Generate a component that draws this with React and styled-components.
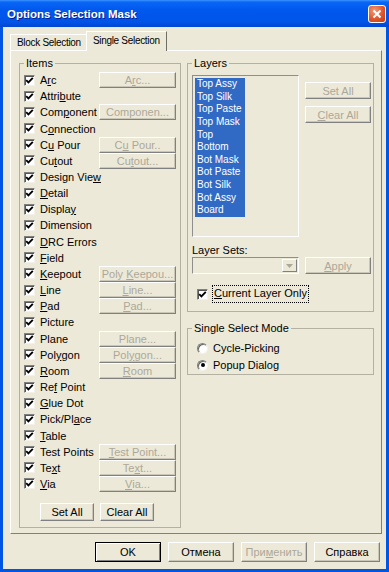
import React from 'react';
import styled, { createGlobalStyle, css } from 'styled-components';

const GlobalStyle = createGlobalStyle`
  html, body { margin: 0; padding: 0; background: #fff; }
  body {
    font-family: "Liberation Sans", Arial, sans-serif;
    font-size: 11px;
    color: #000;
  }
  * { box-sizing: border-box; }
`;

const Window = styled.div`
  width: 389px;
  height: 572px;
  display: flex;
  flex-direction: column;
  background: #0055e5;
`;

const TitleBar = styled.div`
  flex: none;
  height: 27px;
  display: flex;
  align-items: center;
  justify-content: space-between;
  padding: 1px 3px 0 7px;
  background: linear-gradient(
    #3d95ff 0,
    #0a66f5 2px,
    #0058ee 10px,
    #0054e8 22px,
    #0046d2 27px
  );
`;

const Title = styled.span`
  color: #fff;
  font-weight: bold;
  font-size: 11.5px;
  text-shadow: 1px 1px 0 #0a1e8c;
`;

const CloseButton = styled.div`
  width: 18px;
  height: 18px;
  border: 1px solid #fff;
  border-radius: 3px;
  display: flex;
  align-items: center;
  justify-content: center;
  background: radial-gradient(circle at 35% 30%, #f39a78 0, #e0562c 55%, #c43a12 100%);
`;

const Client = styled.div`
  flex: 1;
  margin: 0 3px 3px;
  background: #ece9d8;
  display: flex;
  flex-direction: column;
  padding: 4px 4px 7px 7px;
`;

const TabStrip = styled.div`
  height: 19px;
  display: flex;
  align-items: flex-end;
  position: relative;
  z-index: 1;
`;

const Tab = styled.div`
  display: flex;
  align-items: center;
  font-size: 10px;
  letter-spacing: -0.3px;
  white-space: nowrap;
  background: #ece9d8;
  border-top: 1px solid #fff;
  border-left: 1px solid #fff;
  ${p => p.$active
    ? css`
        height: 20px;
        margin-bottom: -1px;
        padding: 0 6px 2px 6px;
        border-right: 1px solid #716f64;
      `
    : css`
        height: 16px;
        padding: 0 5px 0 6px;
      `}
`;

const Panel = styled.div`
  height: 484px;
  display: flex;
  gap: 6px;
  padding: 6px 7px 5px 8px;
  border-top: 1px solid #fff;
  border-left: 1px solid #fff;
  border-right: 1px solid #808080;
  border-bottom: 1px solid #808080;
`;

const Group = styled.fieldset`
  margin: 0;
  min-width: 0;
  border: 1px solid #b4b1a3;
  padding: 0 4px;
`;

const Legend = styled.legend`
  padding: 0 2px;
  line-height: 13px;
`;

const ItemsGroup = styled(Group)`
  width: 162px;
  flex: none;
  padding: 2px 4px 6px 4px;
  display: flex;
  flex-direction: column;
`;

const ItemRow = styled.div`
  height: 16.16px;
  display: grid;
  grid-template-columns: 1fr 77px;
  align-items: stretch;
`;

const CheckLabel = styled.label`
  display: flex;
  align-items: center;
  gap: ${p => p.$gap || 5}px;
  white-space: nowrap;
`;

const Box = styled.span`
  flex: none;
  width: 11px;
  height: 11px;
  background: #fff;
  border-top: 1px solid #808080;
  border-left: 1px solid #808080;
  border-right: 1px solid #f4f2e8;
  border-bottom: 1px solid #f4f2e8;
  box-shadow: inset 1px 1px 0 #555;
  display: flex;
  align-items: center;
  justify-content: center;
`;

const Button = styled.div`
  display: flex;
  align-items: center;
  justify-content: center;
  white-space: pre;
  overflow: hidden;
  background: #ece9d8;
  color: ${p => (p.$disabled ? '#aca899' : '#000')};
  border-top: 1px solid #fff;
  border-left: 1px solid #fff;
  border-right: 1px solid #808080;
  border-bottom: 1px solid #808080;
  box-shadow: inset -1px -1px 0 #cbc7b8;
`;

const SetButtons = styled.div`
  display: flex;
  gap: 6px;
  margin-top: 11px;
  padding-left: 16px;
`;

const SmallButton = styled(Button)`
  width: 54px;
  height: 18px;
`;

const RightColumn = styled.div`
  width: 187px;
  flex: none;
  display: flex;
  flex-direction: column;
  gap: 10px;
`;

const LayersGroup = styled(Group)`
  padding: 5px 2px 9px 4px;
`;

const LayersGrid = styled.div`
  display: grid;
  grid-template-columns: 107px 66px;
  column-gap: 6px;
  align-items: end;
`;

const ListBox = styled.div`
  height: 162px;
  padding: 2px 0 0 2px;
  border-top: 1px solid #8e8e8e;
  border-left: 1px solid #8e8e8e;
  border-right: 1px solid #fff;
  border-bottom: 1px solid #fff;
`;

const ListItem = styled.div`
  width: 50px;
  height: 12.64px;
  line-height: 12.64px;
  padding-left: 2px;
  font-size: 10px;
  color: #fff;
  background: #316ac5;
  white-space: nowrap;
`;

const ListButtons = styled.div`
  align-self: start;
  margin-top: 7px;
  display: flex;
  flex-direction: column;
  gap: 7px;
`;

const SideButton = styled(Button)`
  height: 17px;
`;

const FieldLabel = styled.div`
  grid-column: 1 / 3;
  margin-top: 7px;
  line-height: 13px;
`;

const ComboBox = styled.div`
  height: 17px;
  display: flex;
  justify-content: flex-end;
  padding: 1px;
  border-top: 1px solid #8e8e8e;
  border-left: 1px solid #8e8e8e;
  border-right: 1px solid #fff;
  border-bottom: 1px solid #fff;
`;

const DropButton = styled.div`
  width: 15px;
  display: flex;
  align-items: center;
  justify-content: center;
  border-top: 1px solid #fff;
  border-left: 1px solid #fff;
  border-right: 1px solid #808080;
  border-bottom: 1px solid #808080;
`;

const CheckRow = styled.div`
  grid-column: 1 / 3;
  margin-top: 12px;
  height: 16px;
  display: flex;
  padding-left: 5px;
`;

const Focus = styled.span`
  padding: 1px 1px 2px;
  border: 1px dotted #000;
  line-height: 13px;
`;

const ModeGroup = styled(Group)`
  padding: 5px 4px 1px 4px;
  display: flex;
  flex-direction: column;
  gap: 1px;
`;

const RadioRow = styled.label`
  height: 16px;
  display: flex;
  align-items: center;
  gap: 5px;
  padding-left: 5px;
`;

const Radio = styled.span`
  width: 11px;
  height: 11px;
  border-radius: 50%;
  background: #fff;
  border: 1px solid;
  border-color: #808080 #f4f2e8 #f4f2e8 #808080;
  box-shadow: inset 1px 1px 0 #666;
  display: flex;
  align-items: center;
  justify-content: center;

  &::after {
    content: '';
    width: 4px;
    height: 4px;
    border-radius: 50%;
    background: ${p => (p.$checked ? '#000' : 'transparent')};
  }
`;

const Footer = styled.div`
  margin-top: 8px;
  display: flex;
  justify-content: flex-end;
  gap: 7px;
  padding-right: 2px;
`;

const DialogButton = styled(Button)`
  width: 66px;
  height: 20px;
  ${p => p.$default && css`
    border: 1px solid #000;
    box-shadow: inset 1px 1px 0 #fff, inset -1px -1px 0 #808080;
  `}
`;

// '&' marks the mnemonic letter, as in the Win32 resource strings
const Mnemonic = ({ text }) => {
  const i = text.indexOf('&');
  if (i < 0) return <span>{text}</span>;
  return (
    <span>
      {text.slice(0, i)}
      <u>{text[i + 1]}</u>
      {text.slice(i + 2)}
    </span>
  );
};

const Check = () => (
  <Box>
    <svg width="9" height="9" viewBox="0 0 9 9">
      <path d="M1.2 4.2 L3.4 6.4 L7.8 1.8" fill="none" stroke="#000" strokeWidth="1.9" />
    </svg>
  </Box>
);

const items = [
  ['A&rc', 'A&rc...'],
  ['Attri&bute'],
  ['Com&ponent', 'Componen...'],
  ['C&onnection'],
  ['C&u Pour', 'C&u Pour..'],
  ['Cu&tout', 'Cu&tout...'],
  ['Design Vie&w'],
  ['&Detail'],
  ['Displa&y'],
  ['Dimension'],
  ['&DRC Errors'],
  ['&Field'],
  ['&Keepout', 'Poly &Keepou...'],
  ['&Line', '&Line...'],
  ['&Pad', '&Pad...'],
  ['Picture'],
  ['Plane', 'Plane...'],
  ['Pol&ygon', 'Pol&ygon...'],
  ['&Room', '&Room'],
  ['Re&f Point'],
  ['&Glue Dot'],
  ['Pick/Pl&ace'],
  ['&Table'],
  ['Test Points', '&Test Point...'],
  ['Te&xt', 'Te&xt...'],
  ['&Via', '&Via...'],
];

const layers = [
  'Top Assy', 'Top Silk', 'Top Paste', 'Top Mask', 'Top', 'Bottom',
  'Bot Mask', 'Bot Paste', 'Bot Silk', 'Bot Assy', 'Board',
];

export default function App() {
  return (
    <>
      <GlobalStyle />
      <Window>
        <TitleBar>
          <Title>Options Selection Mask</Title>
          <CloseButton>
            <svg width="10" height="10" viewBox="0 0 10 10">
              <path d="M1.5 1.5 L8.5 8.5 M8.5 1.5 L1.5 8.5" stroke="#fff" strokeWidth="2" />
            </svg>
          </CloseButton>
        </TitleBar>
        <Client>
          <TabStrip>
            <Tab>Block Selection</Tab>
            <Tab $active>Single Selection</Tab>
          </TabStrip>
          <Panel>
            <ItemsGroup>
              <Legend>Items</Legend>
              {items.map(([label, button]) => (
                <ItemRow key={label}>
                  <CheckLabel>
                    <Check />
                    <Mnemonic text={label} />
                  </CheckLabel>
                  {button && (
                    <Button $disabled><Mnemonic text={button} /></Button>
                  )}
                </ItemRow>
              ))}
              <SetButtons>
                <SmallButton>Set All</SmallButton>
                <SmallButton>Clear All</SmallButton>
              </SetButtons>
            </ItemsGroup>
            <RightColumn>
              <LayersGroup>
                <Legend>Layers</Legend>
                <LayersGrid>
                  <ListBox>
                    {layers.map(l => <ListItem key={l}>{l}</ListItem>)}
                  </ListBox>
                  <ListButtons>
                    <SideButton $disabled>Set All</SideButton>
                    <SideButton $disabled><Mnemonic text="&Clear All" /></SideButton>
                  </ListButtons>
                  <FieldLabel>Layer Sets:</FieldLabel>
                  <ComboBox>
                    <DropButton>
                      <svg width="7" height="4" viewBox="0 0 7 4">
                        <path d="M0 0 H7 L3.5 4 Z" fill="#aca899" />
                      </svg>
                    </DropButton>
                  </ComboBox>
                  <SideButton $disabled><Mnemonic text="&Apply" /></SideButton>
                  <CheckRow>
                    <CheckLabel $gap={4}>
                      <Check />
                      <Focus><Mnemonic text="&Current Layer Only" /></Focus>
                    </CheckLabel>
                  </CheckRow>
                </LayersGrid>
              </LayersGroup>
              <ModeGroup>
                <Legend>Single Select Mode</Legend>
                <RadioRow><Radio />Cycle-Picking</RadioRow>
                <RadioRow><Radio $checked />Popup Dialog</RadioRow>
              </ModeGroup>
            </RightColumn>
          </Panel>
          <Footer>
            <DialogButton $default>OK</DialogButton>
            <DialogButton>Отмена</DialogButton>
            <DialogButton $disabled><Mnemonic text="При&менить" /></DialogButton>
            <DialogButton>Справка</DialogButton>
          </Footer>
        </Client>
      </Window>
    </>
  );
}
